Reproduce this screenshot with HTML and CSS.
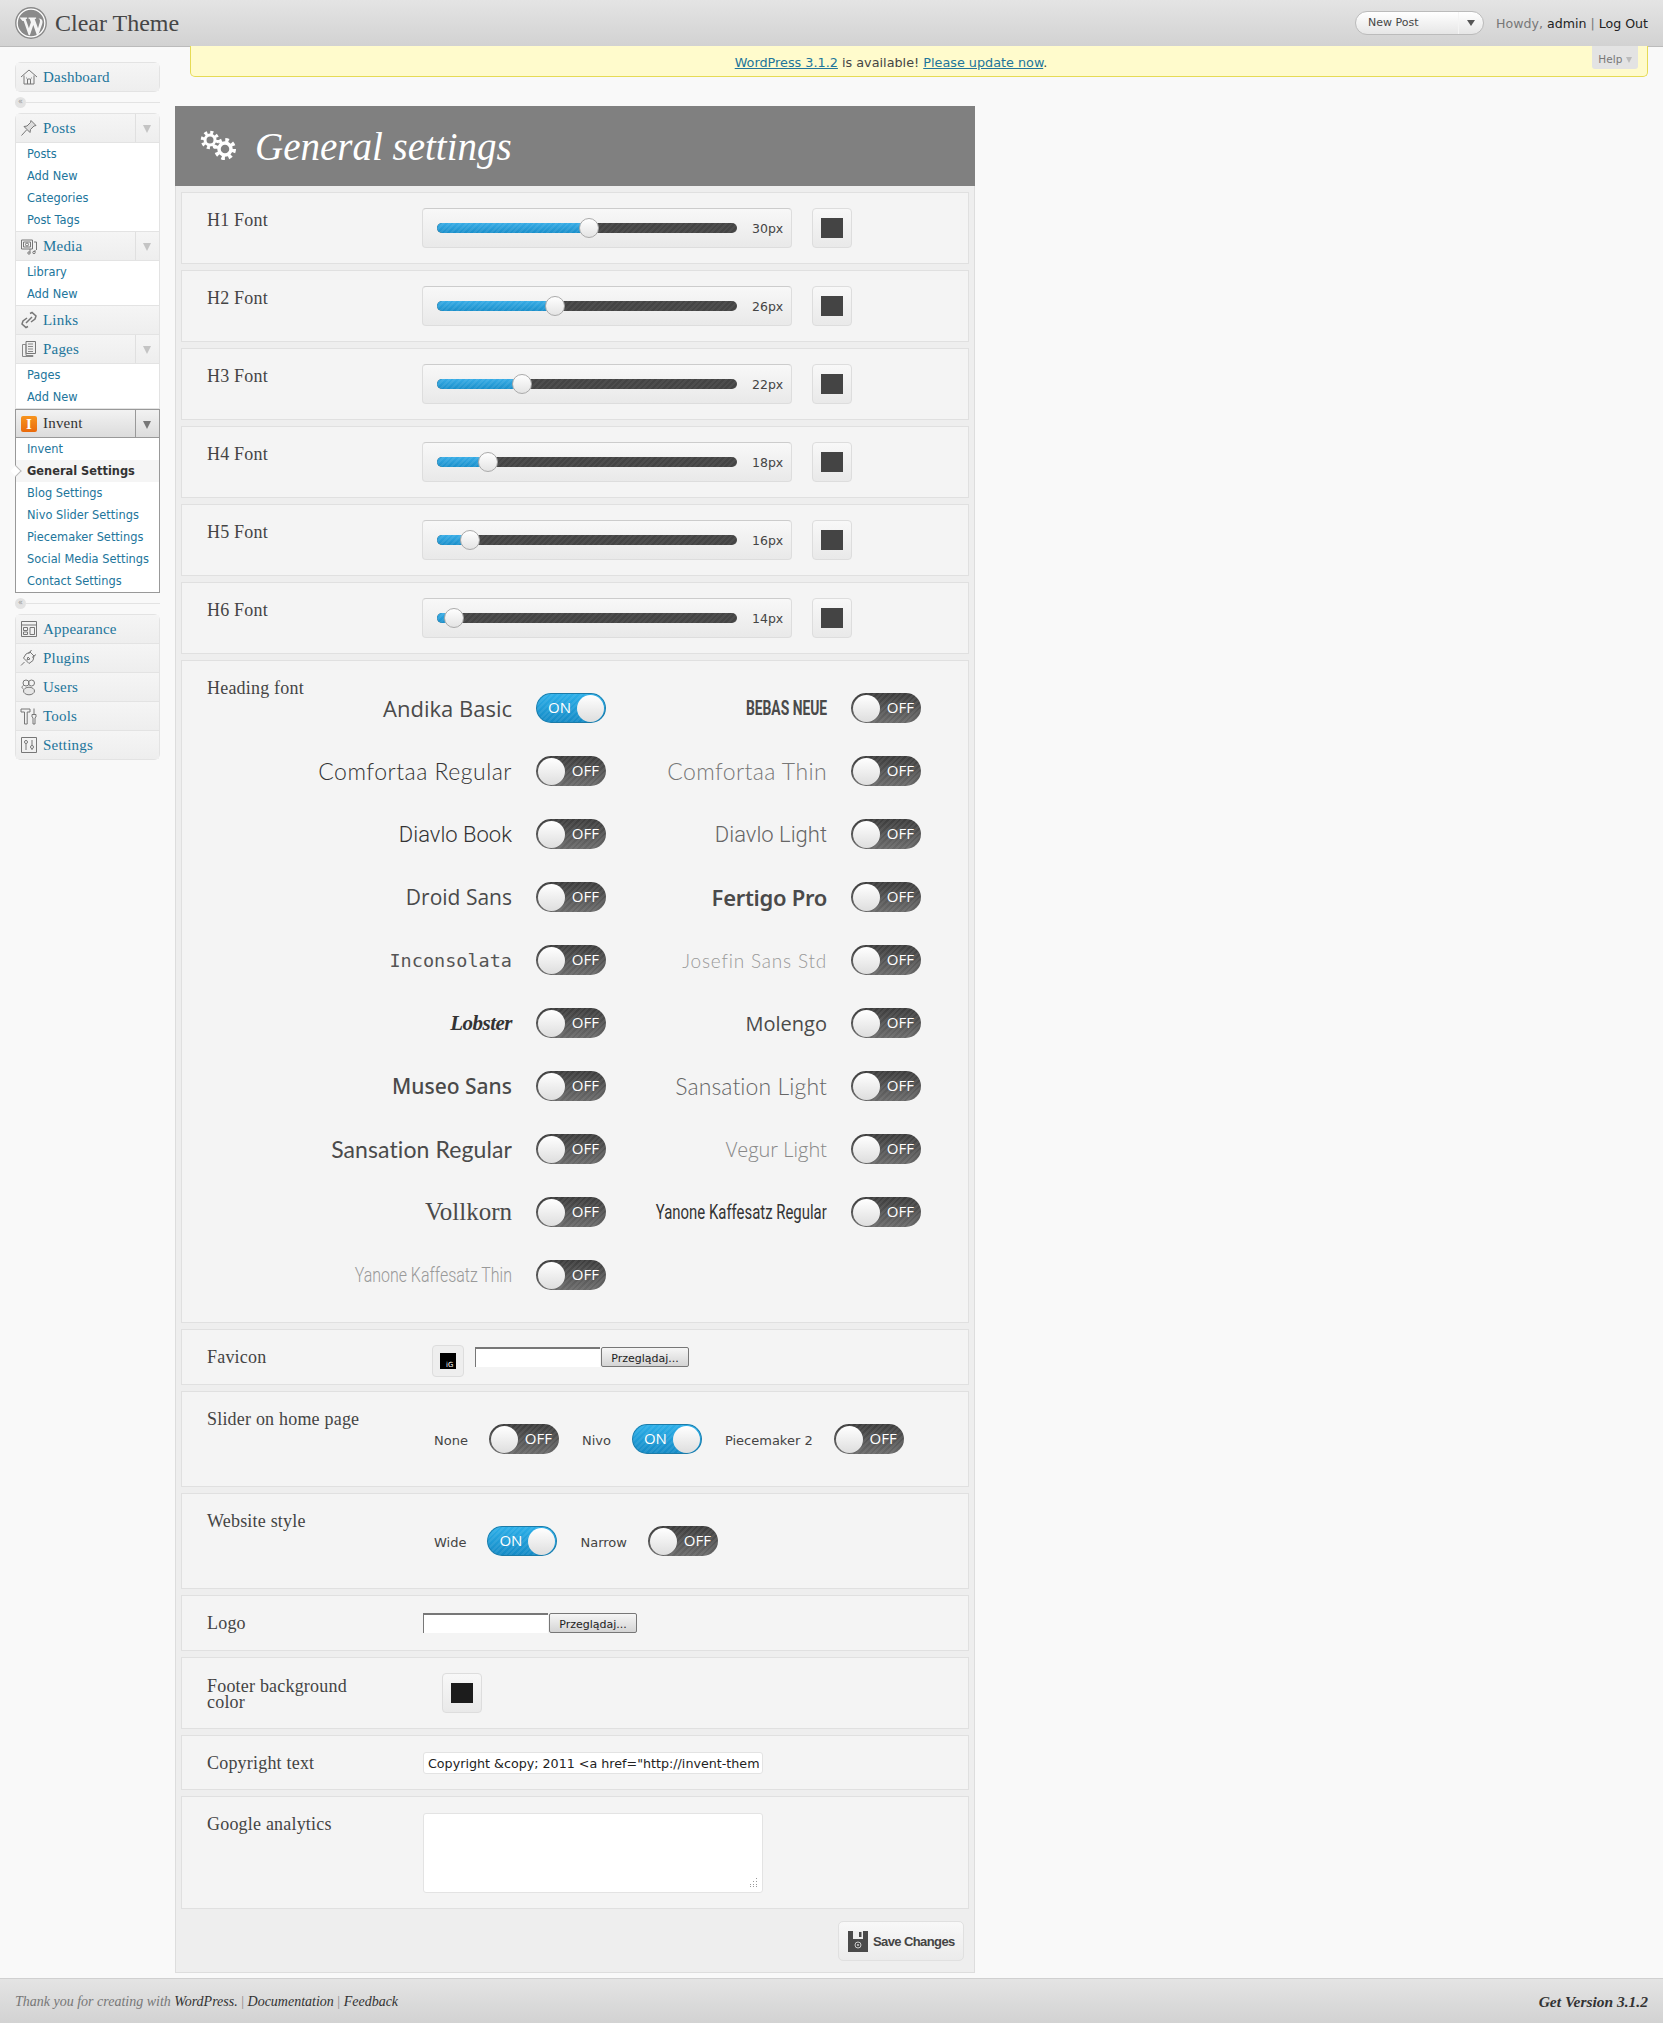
FILE: index.html
```html
<!DOCTYPE html>
<html lang="en">
<head>
    <meta charset="UTF-8">
    <title>General settings</title>
    <link rel="stylesheet" href="styles.css">
</head>
<body>
    <!-- top bar -->
    <div class="header">
        <svg class="wp-logo" viewBox="0 0 32 32">
            <circle cx="16" cy="16" r="15.2" fill="#fff" stroke="#8a8a8a" stroke-width="1.4"/>
            <circle cx="16" cy="16" r="13.2" fill="#8a8a8a"/>
            <path d="M4.5 10.5h7.6v1.2l-1.4.2 3.2 9.4 2-6-1.2-3.4-1.2-.2v-1.2h7.6v1.2l-1.4.2 3.3 9.4 1.8-6c.6-2-.2-3.2-1.4-3.7 2.2-.2 4 1.2 4.1 2.8.1 1.5-.5 3-1 4.5l-3.3 9.3h-1.3l-3.6-10.3-3.4 10.3h-1.2l-5-14.1-1.2-.2z" fill="#f4f4f4"/>
        </svg>
        <div class="site-name">Clear Theme</div>
        <div class="header-right">
            <div class="fav">
                <span class="fav-label">New Post</span>
                <span class="fav-arrow"></span>
            </div>
            <div class="howdy">Howdy, <a>admin</a> | <a>Log Out</a></div>
        </div>
    </div>

    <div class="wrap">
        <!-- side menu -->
        <div class="sidebar">
            <div class="menu">
                <div class="menu-head">
                    <svg class="ico" viewBox="0 0 18 18"><path d="M1 9l8-7 8 7M4 7.5V16h10V7.5M7.5 16v-5h3v5M6 10h.8M11.2 10h.8" fill="none" stroke="#777"/></svg>
                    <span>Dashboard</span>
                </div>
            </div>
            <div class="sep"><span class="sep-dot">«</span><span class="sep-line"></span></div>
            <div class="menu">
                <div class="menu-head">
                    <svg class="ico" viewBox="0 0 18 18"><path d="M11 1.5l5 5-2 .5-3.5 3.5-.5 3-6-6 3-.5L10.5 3.5zM6.5 11l-5 5.5" fill="#ddd" stroke="#777"/></svg>
                    <span>Posts</span><i class="drop"></i>
                </div>
                <div class="sub">
                    <a>Posts</a><a>Add New</a><a>Categories</a><a>Post Tags</a>
                </div>
                <div class="menu-head">
                    <svg class="ico" viewBox="0 0 18 18"><path d="M1.5 3h11v9h-11zM3.5 5h7v5h-7z" fill="none" stroke="#777"/><circle cx="7" cy="7.5" r="1.5" fill="none" stroke="#777"/><path d="M14 5h2.5v8M10 12v3.5M15 13v2" fill="none" stroke="#777"/><circle cx="9" cy="16" r="1.2" fill="none" stroke="#777"/><circle cx="14" cy="15.5" r="1.2" fill="none" stroke="#777"/></svg>
                    <span>Media</span><i class="drop"></i>
                </div>
                <div class="sub">
                    <a>Library</a><a>Add New</a>
                </div>
                <div class="menu-head">
                    <svg class="ico" viewBox="0 0 18 18"><path d="M10 2.5l2-1 4 3.5-1 3-4 3M8 15.5l-2 1-4-3.5 1-3 4-3M6 12l6-6" fill="none" stroke="#777" stroke-width="1.5"/></svg>
                    <span>Links</span>
                </div>
                <div class="menu-head">
                    <svg class="ico" viewBox="0 0 18 18"><path d="M6 1.5h9.5v12H6z" fill="#eee" stroke="#777"/><path d="M2.5 4.500H6v11h7v1H2.5zM8 4h5M8 6.5h5M8 9h5M8 11.5h5" fill="none" stroke="#888"/></svg>
                    <span>Pages</span><i class="drop"></i>
                </div>
                <div class="sub">
                    <a>Pages</a><a>Add New</a>
                </div>
                <div class="menu-open">
                    <div class="menu-head">
                        <span class="invent-ico">I</span>
                        <span>Invent</span><i class="drop"></i>
                    </div>
                    <div class="sub">
                        <a>Invent</a>
                        <a class="current">General Settings</a>
                        <a>Blog Settings</a>
                        <a>Nivo Slider Settings</a>
                        <a>Piecemaker Settings</a>
                        <a>Social Media Settings</a>
                        <a>Contact Settings</a>
                    </div>
                </div>
            </div>
            <div class="sep"><span class="sep-dot">«</span><span class="sep-line"></span></div>
            <div class="menu">
                <div class="menu-head">
                    <svg class="ico" viewBox="0 0 18 18"><path d="M1.5 1.5h15v15h-15zM1.5 5h15M3.500 7.5h4v3h-4zM3.500 12h4v2.500h-4zM10 7.5h4.500v7H10z" fill="none" stroke="#777"/></svg>
                    <span>Appearance</span>
                </div>
                <div class="menu-head">
                    <svg class="ico" viewBox="0 0 18 18"><path d="M1 16.5l3.5-3.5M3.5 9l5.5 5.500 4-3 1-4.500-4-4-4 2zM8.500 5l3-4M12 8.500l4-3M8 8l-1 3 3-1-1-1z" fill="none" stroke="#777"/></svg>
                    <span>Plugins</span>
                </div>
                <div class="menu-head">
                    <svg class="ico" viewBox="0 0 18 18"><circle cx="6" cy="5" r="3" fill="none" stroke="#777"/><circle cx="11.5" cy="5" r="3" fill="none" stroke="#777"/><ellipse cx="9" cy="13" rx="5.5" ry="3.8" fill="#e6e6e6" stroke="#777"/><path d="M3.5 11C1.5 10 1.5 8.5 3.5 7.5" fill="none" stroke="#777"/></svg>
                    <span>Users</span>
                </div>
                <div class="menu-head">
                    <svg class="ico" viewBox="0 0 18 18"><path d="M1 2h9v3H7.2v12H4.5V5H1zM14 1.500v6M12 7.500h4V10l-1 .8V17h-2v-6.200L12 10z" fill="none" stroke="#777"/></svg>
                    <span>Tools</span>
                </div>
                <div class="menu-head">
                    <svg class="ico" viewBox="0 0 18 18"><path d="M1.5 1.5h15v15h-15zM6 4v10M12 4v10" fill="none" stroke="#777"/><circle cx="6" cy="6" r="1.5" fill="#fff" stroke="#777"/><circle cx="12" cy="11" r="1.5" fill="#fff" stroke="#777"/></svg>
                    <span>Settings</span>
                </div>
            </div>
        </div>

        <!-- main area -->
        <div class="main">
            <div class="notice">
                <a>WordPress 3.1.2</a> is available! <a>Please update now</a>.
                <div class="help">Help <i></i></div>
            </div>

            <div class="panel">
                <div class="panel-title">
                    <svg class="gears" viewBox="0 0 38 32">
                        <g fill="none" stroke="#fff">
                            <circle cx="10" cy="10" r="5" stroke-width="3"/>
                            <circle cx="10" cy="10" r="7.5" stroke-width="3.5" stroke-dasharray="3 2.89"/>
                            <circle cx="25" cy="19" r="6" stroke-width="3.5"/>
                            <circle cx="25" cy="19" r="9" stroke-width="4" stroke-dasharray="3.5 3.57"/>
                        </g>
                    </svg>
                    <h1>General settings</h1>
                </div>

                <div class="panel-body">
                    <div class="row">
                        <div class="label label-low">H1 Font</div>
                        <div class="slider">
                            <div class="track"><div class="fill" style="width:152px"><span class="knob"></span></div></div>
                            <span class="value">30px</span>
                        </div>
                        <div class="swatch"><span class="swatch-color"></span></div>
                    </div>
                    <div class="row">
                        <div class="label label-low">H2 Font</div>
                        <div class="slider">
                            <div class="track"><div class="fill" style="width:118px"><span class="knob"></span></div></div>
                            <span class="value">26px</span>
                        </div>
                        <div class="swatch"><span class="swatch-color"></span></div>
                    </div>
                    <div class="row">
                        <div class="label label-low">H3 Font</div>
                        <div class="slider">
                            <div class="track"><div class="fill" style="width:85px"><span class="knob"></span></div></div>
                            <span class="value">22px</span>
                        </div>
                        <div class="swatch"><span class="swatch-color"></span></div>
                    </div>
                    <div class="row">
                        <div class="label label-low">H4 Font</div>
                        <div class="slider">
                            <div class="track"><div class="fill" style="width:51px"><span class="knob"></span></div></div>
                            <span class="value">18px</span>
                        </div>
                        <div class="swatch"><span class="swatch-color"></span></div>
                    </div>
                    <div class="row">
                        <div class="label label-low">H5 Font</div>
                        <div class="slider">
                            <div class="track"><div class="fill" style="width:33px"><span class="knob"></span></div></div>
                            <span class="value">16px</span>
                        </div>
                        <div class="swatch"><span class="swatch-color"></span></div>
                    </div>
                    <div class="row">
                        <div class="label label-low">H6 Font</div>
                        <div class="slider">
                            <div class="track"><div class="fill" style="width:17px"><span class="knob"></span></div></div>
                            <span class="value">14px</span>
                        </div>
                        <div class="swatch"><span class="swatch-color"></span></div>
                    </div>

                    <!-- heading fonts -->
                    <div class="row row-fonts">
                        <div class="label label-fonts">Heading font</div>
                        <div class="fonts">
                            <div class="font"><span class="f-andika">Andika Basic</span><div class="toggle on"><b>ON</b><span></span></div></div>
                            <div class="font"><span class="f-bebas">BEBAS NEUE</span><div class="toggle"><span></span><b>OFF</b></div></div>
                            <div class="font"><span class="f-comfortaa">Comfortaa Regular</span><div class="toggle"><span></span><b>OFF</b></div></div>
                            <div class="font"><span class="f-comfortaa-thin">Comfortaa Thin</span><div class="toggle"><span></span><b>OFF</b></div></div>
                            <div class="font"><span class="f-diavlo">Diavlo Book</span><div class="toggle"><span></span><b>OFF</b></div></div>
                            <div class="font"><span class="f-diavlo-light">Diavlo Light</span><div class="toggle"><span></span><b>OFF</b></div></div>
                            <div class="font"><span class="f-droid">Droid Sans</span><div class="toggle"><span></span><b>OFF</b></div></div>
                            <div class="font"><span class="f-fertigo">Fertigo Pro</span><div class="toggle"><span></span><b>OFF</b></div></div>
                            <div class="font"><span class="f-inconsolata">Inconsolata</span><div class="toggle"><span></span><b>OFF</b></div></div>
                            <div class="font"><span class="f-josefin">Josefin Sans Std</span><div class="toggle"><span></span><b>OFF</b></div></div>
                            <div class="font"><span class="f-lobster">Lobster</span><div class="toggle"><span></span><b>OFF</b></div></div>
                            <div class="font"><span class="f-molengo">Molengo</span><div class="toggle"><span></span><b>OFF</b></div></div>
                            <div class="font"><span class="f-museo">Museo Sans</span><div class="toggle"><span></span><b>OFF</b></div></div>
                            <div class="font"><span class="f-sansation-light">Sansation Light</span><div class="toggle"><span></span><b>OFF</b></div></div>
                            <div class="font"><span class="f-sansation">Sansation Regular</span><div class="toggle"><span></span><b>OFF</b></div></div>
                            <div class="font"><span class="f-vegur">Vegur Light</span><div class="toggle"><span></span><b>OFF</b></div></div>
                            <div class="font"><span class="f-vollkorn">Vollkorn</span><div class="toggle"><span></span><b>OFF</b></div></div>
                            <div class="font"><span class="f-yanone">Yanone Kaffesatz Regular</span><div class="toggle"><span></span><b>OFF</b></div></div>
                            <div class="font"><span class="f-yanone-thin">Yanone Kaffesatz Thin</span><div class="toggle"><span></span><b>OFF</b></div></div>
                        </div>
                    </div>

                    <div class="row row-favicon">
                        <div class="label label-low">Favicon</div>
                        <div class="favicon"><span class="favicon-img">iG</span></div>
                        <div class="file file-favicon"><input type="text"><button type="button">Przeglądaj...</button></div>
                    </div>

                    <div class="row row-options">
                        <div class="label">Slider on home page</div>
                        <div class="options">
                            <span class="opt opt-first">None</span><div class="toggle"><span></span><b>OFF</b></div>
                            <span class="opt">Nivo</span><div class="toggle on"><b>ON</b><span></span></div>
                            <span class="opt">Piecemaker 2</span><div class="toggle"><span></span><b>OFF</b></div>
                        </div>
                    </div>

                    <div class="row row-options">
                        <div class="label">Website style</div>
                        <div class="options">
                            <span class="opt opt-first">Wide</span><div class="toggle on"><b>ON</b><span></span></div>
                            <span class="opt">Narrow</span><div class="toggle"><span></span><b>OFF</b></div>
                        </div>
                    </div>

                    <div class="row row-logo">
                        <div class="label">Logo</div>
                        <div class="file file-logo"><input type="text"><button type="button">Przeglądaj...</button></div>
                    </div>

                    <div class="row">
                        <div class="label label-two">Footer background<br>color</div>
                        <div class="swatch swatch-footer"><span class="swatch-color"></span></div>
                    </div>

                    <div class="row row-copy">
                        <div class="label label-copy">Copyright text</div>
                        <input class="copy-input" type="text" value="Copyright &amp;copy; 2011 &lt;a href=&quot;http://invent-themes.com&quot;&gt;Invent Themes&lt;/a&gt;">
                    </div>

                    <div class="row row-analytics">
                        <div class="label label-copy">Google analytics</div>
                        <div class="analytics-box">
                            <textarea class="analytics"></textarea>
                            <svg class="grip" viewBox="0 0 9 9"><path d="M7 0h1v1H7zM7 3h1v1H7zM4 3h1v1H4zM7 6h1v1H7zM4 6h1v1H4zM1 6h1v1H1zM7 8h1v1H7zM4 8h1v1H4zM1 8h1v1H1z" fill="#999"/></svg>
                        </div>
                    </div>

                    <div class="save-bar">
                        <button class="save" type="button">
                            <svg class="save-ico" viewBox="0 0 20 21"><path d="M0 0h20v21H0z" fill="#4a4a4a"/><path d="M5 0h10v8H5z" fill="#eee"/><path d="M11 1h2.5v5H11z" fill="#4a4a4a"/><circle cx="10" cy="14" r="3" fill="none" stroke="#ccc"/><circle cx="10" cy="14" r="1" fill="#ccc"/></svg>
                            Save Changes
                        </button>
                    </div>
                </div>
            </div>
        </div>
    </div>

    <!-- bottom bar -->
    <div class="footer">
        <div class="footer-left"><em>Thank you for creating with</em> <a>WordPress.</a> <span>|</span> <a>Documentation</a> <span>|</span> <a>Feedback</a></div>
        <div class="footer-right">Get Version 3.1.2</div>
    </div>
</body>
</html>
```

FILE: styles.css
```css
/* page */
body {
    margin: 0;
    background-color: #f9f9f9;
    font-family: "DejaVu Sans", sans-serif;
    color: #333;
}

/* top bar */
.header {
    box-sizing: border-box;
    height: 47px;
    padding: 0 15px;
    display: flex;
    align-items: center;
    background: linear-gradient(#e4e4e4, #d2d2d2);
    border-bottom: 1px solid #bbb;
}

.wp-logo {
    width: 32px;
    height: 32px;
    margin-right: 8px;
}

.site-name {
    font-family: "Liberation Serif", serif;
    font-size: 24px;
    color: #464646;
}

.header-right {
    margin-left: auto;
    display: flex;
    align-items: center;
}

.fav {
    box-sizing: border-box;
    width: 129px;
    height: 24px;
    display: flex;
    border: 1px solid #bbb;
    border-radius: 12px;
    background: linear-gradient(#fff, #e6e6e6);
    font-size: 11px;
    line-height: 22px;
    color: #464646;
}

.fav-label {
    box-sizing: border-box;
    width: 103px;
    padding-left: 12px;
    border-right: 1px solid #f4f4f4;
}

.fav-arrow {
    width: 0;
    height: 0;
    margin: 8px 0 0 8px;
    border-left: 4px solid transparent;
    border-right: 4px solid transparent;
    border-top: 6px solid #555;
}

.howdy {
    margin-left: 12px;
    font-size: 12.6px;
    color: #777;
}

.howdy a {
    color: #222;
}

/* side menu */
.wrap {
    display: flex;
    padding-left: 15px;
}

.sidebar {
    width: 145px;
    flex-shrink: 0;
    margin: 15px 15px 0 0;
}

.menu {
    border: 1px solid #e3e3e3;
    border-radius: 6px;
    background-color: #fff;
}

.menu-head {
    box-sizing: border-box;
    height: 29px;
    position: relative;
    display: flex;
    align-items: center;
    padding-left: 27px;
    background: linear-gradient(#f5f5f5, #eee);
    border-bottom: 1px solid #e3e3e3;
    font-family: "Liberation Serif", serif;
    font-size: 15px;
    letter-spacing: .2px;
    color: #21759b;
}

.menu > .menu-head:last-child {
    border-bottom: none;
    height: 28px;
}

.ico {
    position: absolute;
    left: 4px;
    top: 5px;
    width: 18px;
    height: 18px;
}

.drop {
    position: absolute;
    right: 0;
    top: 0;
    width: 23px;
    height: 28px;
    border-left: 1px solid #e0e0e0;
}

.drop::after {
    content: "";
    position: absolute;
    left: 7px;
    top: 11px;
    border-left: 4.5px solid transparent;
    border-right: 4.5px solid transparent;
    border-top: 8px solid #c4c4c4;
}

.sub {
    border-bottom: 1px solid #e3e3e3;
    background-color: #fff;
}

.sub a {
    display: block;
    height: 22px;
    padding-left: 11px;
    font-size: 11.4px;
    line-height: 23px;
    color: #21759b;
    white-space: nowrap;
}

.menu-open {
    position: relative;
    margin: 0 -1px -1px;
    border: 1px solid #999;
}

.menu-open .menu-head {
    height: 28px;
    padding-left: 27px;
    background: linear-gradient(#f2f2f2, #dcdcdc);
    border-bottom: 1px solid #999;
    color: #333;
    margin: 0;
}

.menu-open .drop {
    border-left: 1px solid #999;
    height: 27px;
}

.menu-open .drop::after {
    border-top-color: #777;
}

.menu-open .sub {
    border-bottom: none;
}

.invent-ico {
    position: absolute;
    left: 5px;
    top: 6px;
    width: 16px;
    height: 16px;
    border-radius: 2px;
    background: linear-gradient(#f7941e, #ea6a0c);
    font-family: "Liberation Serif", serif;
    font-size: 15px;
    font-weight: bold;
    line-height: 16px;
    text-align: center;
    color: #fff;
    letter-spacing: 0;
}

.sub a.current {
    position: relative;
    background-color: #f5f5f5;
    font-weight: bold;
    color: #333;
}

.sub a.current::before {
    content: "";
    position: absolute;
    left: -4px;
    top: 7px;
    width: 7px;
    height: 7px;
    background-color: #fff;
    border-top: 1px solid #bbb;
    border-right: 1px solid #bbb;
    transform: rotate(45deg);
}

.sep {
    height: 11px;
    margin: 5px 0;
    display: flex;
    align-items: center;
}

.sep-dot {
    width: 11px;
    height: 11px;
    border-radius: 50%;
    background-color: #e3e3e3;
    font-size: 8px;
    line-height: 10px;
    text-align: center;
    color: #999;
}

.sep-line {
    flex: 1;
    height: 1px;
    background-color: #e3e3e3;
}

/* main area */
.main {
    flex: 1;
}

.notice {
    box-sizing: border-box;
    position: relative;
    height: 31px;
    margin: -1px 15px 29px;
    padding-right: 56px;
    background-color: #fffbcc;
    border: 1px solid #e6db55;
    border-top: none;
    border-radius: 0 0 5px 5px;
    font-size: 12.8px;
    line-height: 33px;
    text-align: center;
    color: #444;
}

.notice a {
    color: #21759b;
    text-decoration: underline;
}

.help {
    position: absolute;
    right: 9px;
    top: 0;
    width: 46px;
    height: 23px;
    background-color: #e3e3e3;
    border-radius: 0 0 3px 3px;
    font-size: 10.5px;
    line-height: 26px;
    color: #777;
}

.help i {
    display: inline-block;
    border-left: 3.5px solid transparent;
    border-right: 3.5px solid transparent;
    border-top: 6px solid #bbb;
}

.panel {
    width: 800px;
}

.panel-title {
    height: 80px;
    padding-left: 25px;
    display: flex;
    align-items: center;
    background-color: #808080;
}

.gears {
    width: 38px;
    height: 32px;
    margin-right: 17px;
}

.panel-title h1 {
    margin: 0;
    font-family: "Liberation Serif", serif;
    font-size: 39px;
    font-weight: normal;
    font-style: italic;
    color: #fff;
}

.panel-body {
    padding: 6px 5px 11px;
    background-color: #eee;
    border: 1px solid #ddd;
    border-top: none;
}

.row {
    display: flex;
    align-items: flex-start;
    margin-bottom: 6px;
    padding: 15px 0 15px 25px;
    background-color: #f4f4f4;
    border: 1px solid #e0e0e0;
}

.label {
    width: 215px;
    flex-shrink: 0;
    font-family: "Liberation Serif", serif;
    font-size: 18px;
    letter-spacing: .2px;
    line-height: 20px;
    color: #444;
}

.label-low {
    margin-top: 2px;
}

/* sliders */
.slider {
    box-sizing: border-box;
    width: 370px;
    height: 40px;
    padding-left: 14px;
    display: flex;
    align-items: center;
    border: 1px solid #ddd;
    border-top-color: #ccc;
    border-radius: 4px;
    background: linear-gradient(#f8f8f8, #e9e9e9);
}

.track {
    width: 300px;
    height: 10px;
    border-radius: 5px;
    background: repeating-linear-gradient(135deg, rgba(255, 255, 255, .05) 0 2px, transparent 2px 4px), #444;
}

.fill {
    position: relative;
    height: 10px;
    border-radius: 5px 0 0 5px;
    background: repeating-linear-gradient(135deg, rgba(255, 255, 255, .08) 0 2px, transparent 2px 4px), linear-gradient(#37ace6, #1a8fca);
}

.knob {
    position: absolute;
    right: -10px;
    top: -5px;
    box-sizing: border-box;
    width: 20px;
    height: 20px;
    border-radius: 50%;
    border: 1px solid #aaa;
    background: linear-gradient(#fff, #e4e4e4);
}

.value {
    margin-left: 15px;
    font-size: 12.5px;
    color: #444;
}

.swatch {
    box-sizing: border-box;
    width: 40px;
    height: 40px;
    margin-left: 20px;
    padding: 9px 8px;
    border: 1px solid #ddd;
    border-radius: 4px;
    background: linear-gradient(#f8f8f8, #e9e9e9);
}

.swatch-color {
    display: block;
    width: 22px;
    height: 20px;
    background-color: #444;
}

.swatch-footer .swatch-color {
    background-color: #1c1c1c;
}

/* font switches */
.row-fonts {
    padding: 17px 0 32px 25px;
}

.label-fonts {
    width: 110px;
}

.fonts {
    margin-top: 15px;
    display: grid;
    grid-template-columns: 289px 315px;
    row-gap: 33px;
}

.font {
    height: 30px;
    display: flex;
    align-items: center;
    justify-content: flex-end;
    gap: 24px;
    font-size: 22px;
    color: #4a4a4a;
    white-space: nowrap;
}

.font > span {
    display: inline-block;
}

.f-andika { font-family: "Open Sans", sans-serif; }
.f-bebas { font-family: "Roboto", sans-serif; font-weight: bold; font-size: 21px; transform: scaleX(.66); transform-origin: right center; margin-left: -40px; }
.f-comfortaa { font-family: "Lato", sans-serif; font-size: 23px; letter-spacing: .5px; font-weight: 300; color: #333; }
.f-comfortaa-thin { font-family: "Lato", sans-serif; font-size: 23px; font-weight: 300; letter-spacing: .4px; color: #777; }
.f-diavlo { font-family: "Roboto", sans-serif; font-size: 22px; font-weight: 300; color: #333; }
.f-diavlo-light { font-family: "Roboto", sans-serif; font-size: 22px; font-weight: 300; color: #666; }
.f-droid { font-family: "Open Sans", sans-serif; font-size: 21px; }
.f-fertigo { font-family: "Noto Sans", sans-serif; font-weight: 600; font-size: 22px; letter-spacing: -.3px; }
.f-inconsolata { font-family: "DejaVu Sans Mono", monospace; font-size: 18.5px; color: #555; }
.f-josefin { font-family: "Lato", sans-serif; font-weight: 300; font-size: 19px; letter-spacing: .8px; color: #999; }
.f-lobster { font-family: "Liberation Serif", serif; font-weight: bold; font-style: italic; font-size: 21px; letter-spacing: -.5px; color: #333; }
.f-molengo { font-family: "Open Sans", sans-serif; font-size: 20px; }
.f-museo { font-family: "Noto Sans", sans-serif; font-weight: 500; font-size: 21px; }
.f-sansation-light { font-family: "Lato", sans-serif; font-weight: 300; font-size: 23px; letter-spacing: .1px; color: #666; }
.f-sansation { font-family: "Lato", sans-serif; font-size: 23px; letter-spacing: .1px; }
.f-vegur { font-family: "Open Sans", sans-serif; font-weight: 300; font-size: 20px; color: #888; }
.f-vollkorn { font-family: "Liberation Serif", serif; font-size: 25px; }
.f-yanone { font-family: "Roboto", sans-serif; font-size: 21px; transform: scaleX(.71); transform-origin: right center; margin-left: -60px; color: #333; }
.f-yanone-thin { font-family: "Roboto", sans-serif; font-weight: 300; font-size: 21px; transform: scaleX(.76); transform-origin: right center; margin-left: -60px; color: #999; }

.toggle {
    box-sizing: border-box;
    width: 70px;
    height: 30px;
    flex-shrink: 0;
    padding: 0 7px 0 2px;
    display: flex;
    align-items: center;
    justify-content: space-between;
    border-radius: 15px;
    background: repeating-linear-gradient(135deg, rgba(255, 255, 255, .07) 0 2px, transparent 2px 4px), linear-gradient(#3c3c3c, #6a6a6a);
}

.toggle span {
    width: 27px;
    height: 27px;
    border-radius: 50%;
    background: linear-gradient(#fff, #dedede);
}

.toggle b {
    padding-bottom: 2px;
    font-family: "Open Sans", sans-serif;
    font-size: 15px;
    font-weight: normal;
    color: #fff;
}

.toggle.on {
    padding: 0 2px 0 12px;
    background: repeating-linear-gradient(135deg, rgba(255, 255, 255, .08) 0 2px, transparent 2px 4px), linear-gradient(#2cb0ea, #1489c4);
    box-shadow: inset 0 0 0 1px #1c7ba8;
}

/* favicon and file inputs */
.row-favicon {
    padding-bottom: 7px;
}

.favicon {
    box-sizing: border-box;
    width: 32px;
    height: 32px;
    margin-left: 10px;
    padding: 7px;
    border: 1px solid #ddd;
    border-radius: 4px;
    background-color: #eee;
}

.favicon-img {
    display: block;
    box-sizing: border-box;
    width: 16px;
    height: 16px;
    padding: 8px 0 0 6px;
    background-color: #000;
    font-size: 7px;
    line-height: 8px;
    color: #fff;
}

.file {
    display: flex;
}

.file input {
    box-sizing: border-box;
    width: 125px;
    height: 20px;
    margin: 0;
    padding: 0;
    background-color: #fff;
    border: none;
    border-top: 2px solid #777;
    border-left: 1px solid #777;
}

.file button {
    box-sizing: border-box;
    width: 88px;
    height: 20px;
    margin-left: 1px;
    padding: 2px 0 0;
    border: 1px solid #777;
    border-radius: 2px;
    background: linear-gradient(#f6f6f6, #d4d4d4);
    font-family: "DejaVu Sans", sans-serif;
    font-size: 11px;
    color: #222;
}

.file-favicon {
    margin: 2px 0 0 11px;
}

.file-logo {
    margin-left: 1px;
}

.row-options {
    padding: 17px 0 32px 25px;
}

.options {
    margin: 15px 0 0 12px;
    display: flex;
    align-items: center;
}

.opt {
    margin: 2px 21px 0 23px;
    font-size: 13px;
    color: #444;
}

.opt-first {
    margin-left: 0;
}

.row-logo {
    padding: 17px 0 17px 25px;
}

.label-two {
    margin-top: 5px;
    line-height: 16px;
}

.row-copy {
    padding: 16px 0 15px 25px;
}

.label-copy {
    margin-top: 1px;
}

.copy-input {
    box-sizing: border-box;
    width: 340px;
    height: 22px;
    margin-left: 1px;
    padding: 0 3px 0 4px;
    border: 1px solid #e3e3e3;
    border-radius: 3px;
    background-color: #fff;
    font-family: "DejaVu Sans", sans-serif;
    font-size: 12.7px;
    color: #222;
}

.row-analytics {
    padding: 16px 0 15px 25px;
}

.analytics-box {
    position: relative;
    height: 80px;
    margin-left: 1px;
}

.analytics {
    display: block;
    box-sizing: border-box;
    width: 340px;
    height: 80px;
    margin: 0;
    border: 1px solid #e3e3e3;
    border-radius: 3px;
    background-color: #fff;
    resize: none;
}

.grip {
    position: absolute;
    right: 5px;
    bottom: 6px;
    width: 9px;
    height: 9px;
}

/* save button */
.save-bar {
    display: flex;
    justify-content: flex-end;
    margin-top: 12px;
    padding-right: 5px;
}

.save {
    box-sizing: border-box;
    width: 126px;
    height: 40px;
    padding: 0 0 0 9px;
    display: flex;
    align-items: center;
    gap: 5px;
    border: 1px solid #e0e0e0;
    border-radius: 5px;
    background: linear-gradient(#f8f8f8, #ebebeb);
    font-family: "Liberation Sans", sans-serif;
    font-size: 13px;
    font-weight: bold;
    letter-spacing: -.6px;
    color: #444;
}

.save-ico {
    width: 20px;
    height: 21px;
}

/* bottom bar */
.footer {
    box-sizing: border-box;
    height: 46px;
    margin-top: 5px;
    padding: 0 15px;
    display: flex;
    align-items: center;
    justify-content: space-between;
    background: linear-gradient(#e4e4e4, #d2d2d2);
    border-top: 1px solid #d0d0d0;
    font-family: "Liberation Serif", serif;
    font-size: 14px;
    font-style: italic;
    color: #333;
}

.footer em {
    color: #777;
}

.footer span {
    color: #888;
    font-style: normal;
}

.footer-right {
    font-size: 15.5px;
    font-weight: bold;
}
```
